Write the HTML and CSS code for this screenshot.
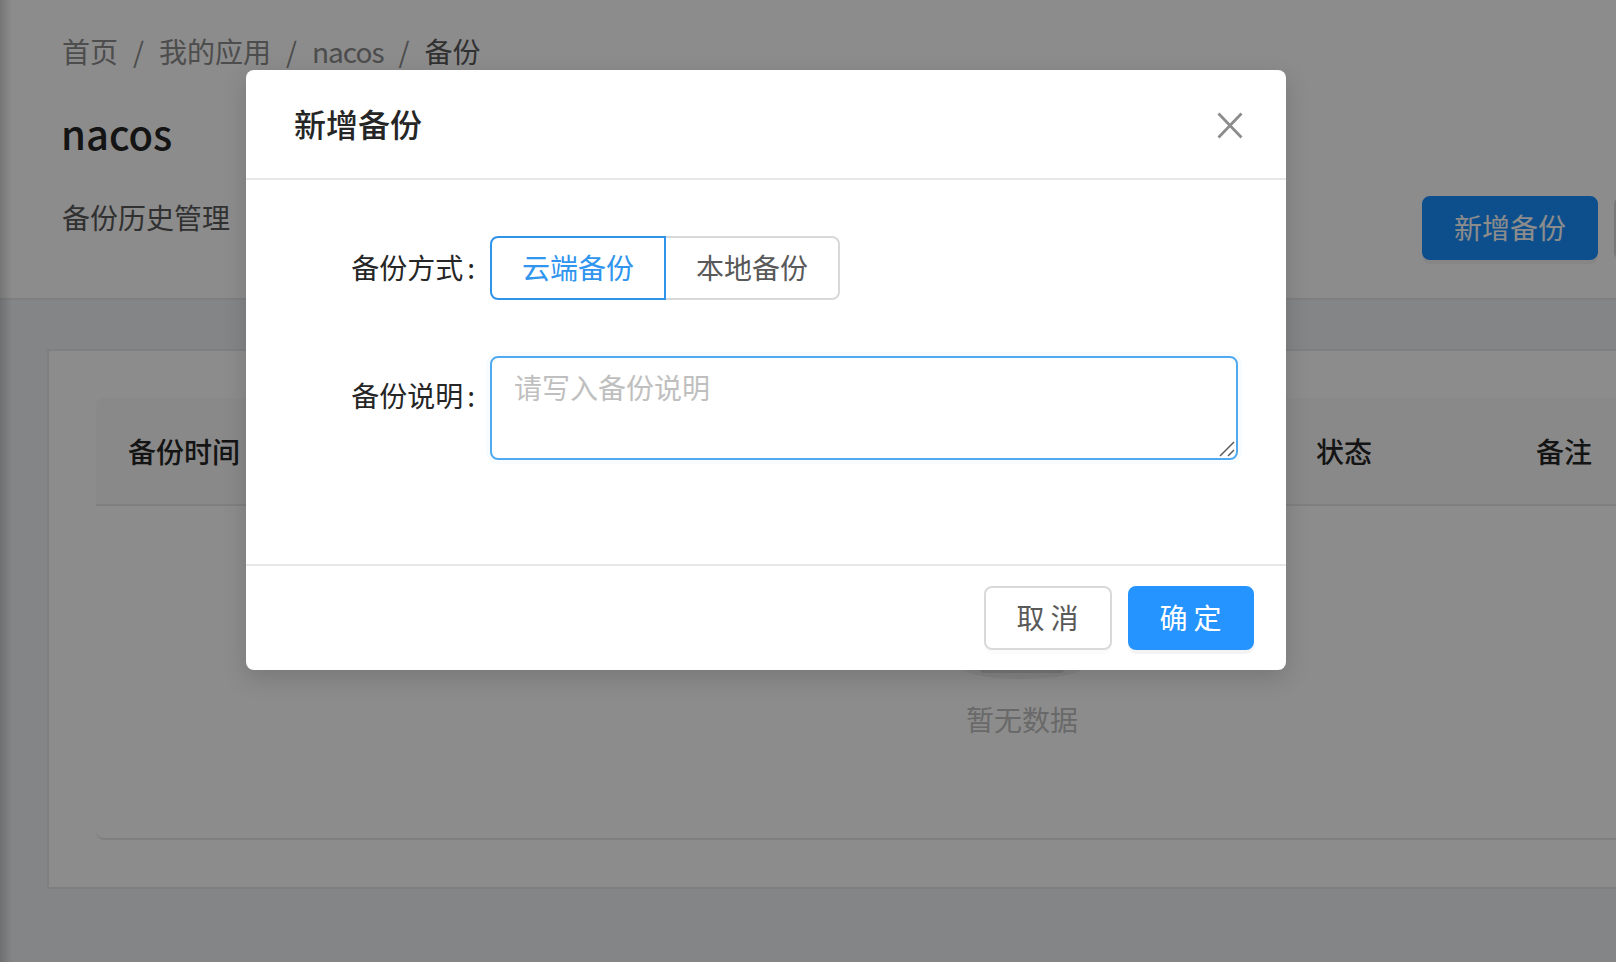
FILE: index.html
```html
<!DOCTYPE html>
<html lang="zh-CN">
<head>
<meta charset="utf-8">
<title>新增备份</title>
<link rel="stylesheet" href="styles.css">
</head>
<body>
<div class="page">
  <header class="head">
    <nav class="crumbs">
      <span>首页</span><span class="sep">/</span>
      <span>我的应用</span><span class="sep">/</span>
      <span class="crumb-latin">nacos</span><span class="sep">/</span>
      <span class="crumb-last">备份</span>
    </nav>
    <h1 class="title">nacos</h1>
    <div class="toolbar">
      <span class="hist">备份历史管理</span>
      <button class="btn btn-primary" type="button">新增备份</button>
      <button class="btn btn-default" type="button"></button>
    </div>
  </header>
  <section class="card">
    <div class="thead">
      <span>备份时间</span>
      <span>状态</span>
      <span>备注</span>
    </div>
    <div class="tbody">
      <svg class="empty-img" width="128" height="82" viewBox="0 0 64 41">
        <ellipse cx="32" cy="33" rx="32" ry="7" fill="#f0f0f0"/>
        <path d="M11 27h42v8a2 2 0 0 1-2 2H13a2 2 0 0 1-2-2z" fill="#d9d9d9"/>
      </svg>
      <div class="empty-text">暂无数据</div>
    </div>
  </section>
</div>
<div class="edge"></div>
<div class="mask"></div>
<div class="modal">
  <div class="modal-head">
    <span class="modal-title">新增备份</span>
    <svg class="close" width="26" height="27" viewBox="0 0 26 27"><path d="M1.5 1.5 24.5 25.5M24.5 1.5 1.5 25.5" fill="none" stroke="#8c8c8c" stroke-width="2.8"/></svg>
  </div>
  <div class="modal-body">
    <div class="row">
      <label class="label"><span>备份方式</span><span class="colon">:</span></label>
      <div class="radio-group">
        <span class="radio radio-on">云端备份</span>
        <span class="radio radio-off">本地备份</span>
      </div>
    </div>
    <div class="row">
      <label class="label label-low"><span>备份说明</span><span class="colon">:</span></label>
      <div class="input-wrap">
        <textarea class="input" placeholder="请写入备份说明"></textarea>
        <svg class="grip" width="16" height="16" viewBox="0 0 16 16"><path d="M1 15 15 1M9 15 15 9" fill="none" stroke="#5c5c5c" stroke-width="1.5"/></svg>
      </div>
    </div>
  </div>
  <div class="modal-foot">
    <button class="btn btn-default btn-two btn-cancel" type="button">取消</button>
    <button class="btn btn-solid btn-two" type="button">确定</button>
  </div>
</div>
</body>
</html>
```
FILE: styles.css
```css
* { box-sizing: border-box; }
html, body {
  margin: 0;
  height: 100%;
  overflow: hidden;
  background: #f0f2f5;
  font-family: "Noto Sans CJK SC", "Noto Sans", sans-serif;
  font-size: 28px;
  line-height: 42px;
  color: #595959;
}
.page { width: 2021px; height: 962px; }
.head {
  background: #fff;
  border-bottom: 2px solid #e8e8e8;
  height: 300px;
  padding: 30px 231px 0 62px;
}
.crumbs { display: flex; color: #8c8c8c; height: 42px; }
.sep { margin: 0 15px; }
.crumb-latin { letter-spacing: -1px; }
.crumb-last { color: #595959; }
.title {
  margin: 33px 0 0 -1px;
  font-size: 40px;
  line-height: 56px;
  font-weight: 500;
  color: #262626;
}
.toolbar { display: flex; align-items: flex-start; gap: 16px; margin-top: 35px; }
.hist { flex: 1; color: #595959; }
.btn {
  width: 176px;
  height: 64px;
  padding: 0 0 2px;
  border-radius: 8px;
  font: inherit;
  box-shadow: 0 4px 0 rgba(0, 0, 0, .015);
}
.btn-primary { background: #1890ff; border: 2px solid #1890ff; color: #fff; box-shadow: 0 4px 0 rgba(0, 0, 0, .045); }
.btn-solid { background: #2694ff; border: 2px solid #2694ff; color: #fff; box-shadow: 0 4px 0 rgba(0, 0, 0, .045); }
.btn-default { background: #fff; border: 2px solid #d9d9d9; color: #595959; }
.btn-two { width: 126px; letter-spacing: 6px; text-indent: 5px; }
.btn-cancel { width: 128px; }
.card {
  margin: 49px 24px 0 47px;
  height: 540px;
  background: #fff;
  border: 2px solid #e8e8e8;
  padding: 47px 47px 46px;
}
.thead {
  display: grid;
  grid-template-columns: 1188px 220px 1fr;
  align-items: center;
  height: 108px;
  padding-left: 32px;
  background: #fafafa;
  border-bottom: 2px solid #e8e8e8;
  font-weight: 500;
  color: #262626;
  border-radius: 8px 8px 0 0;
}
.tbody {
  height: 334px;
  border-bottom: 2px solid #e8e8e8;
  border-radius: 0 0 8px 8px;
  padding-top: 93px;
  display: flex;
  flex-direction: column;
  align-items: center;
}
.empty-img { display: block; }
.empty-text { margin-top: 17px; color: #bfbfbf; }
.edge {
  position: absolute;
  left: 0;
  top: 0;
  bottom: 0;
  width: 12px;
  background: linear-gradient(to right, rgba(0, 0, 0, .16), rgba(0, 0, 0, 0));
}
.mask { position: absolute; inset: 0; background: rgba(0, 0, 0, .45); }
.modal {
  position: absolute;
  left: 246px;
  top: 70px;
  width: 1040px;
  height: 600px;
  display: flex;
  flex-direction: column;
  background: #fff;
  border-radius: 8px;
  box-shadow: 0 8px 24px rgba(0, 0, 0, .15);
}
.modal-head {
  height: 110px;
  flex: none;
  display: flex;
  align-items: center;
  justify-content: space-between;
  padding: 0 43px 2px 48px;
  border-bottom: 2px solid #e8e8e8;
}
.modal-title { font-size: 32px; line-height: 44px; font-weight: 500; color: #262626; }
.close { margin-top: 5px; }
.modal-body {
  flex: 1;
  padding: 56px 48px 0;
  display: flex;
  flex-direction: column;
  gap: 56px;
}
.row { display: flex; align-items: flex-start; }
.label {
  flex: none;
  width: 196px;
  display: flex;
  justify-content: flex-end;
  line-height: 62px;
  color: #262626;
}
.label-low { padding-top: 8px; }
.colon { margin: 0 15px 0 4px; }
.radio-group { display: flex; height: 64px; line-height: 58px; }
.radio { padding: 0 30px; border: 2px solid #d9d9d9; }
.radio-on {
  border-color: #2f93e8;
  color: #2f95ee;
  border-radius: 8px 0 0 8px;
}
.radio-off {
  border-left: 0;
  border-radius: 0 8px 8px 0;
}
.input-wrap { flex: 1; position: relative; }
.input {
  display: block;
  width: 100%;
  height: 104px;
  padding: 8px 22px;
  border: 2px solid #50aaf0;
  border-radius: 8px;
  outline: 0;
  resize: none;
  font: inherit;
  color: #595959;
  box-shadow: 0 0 0 4px rgba(24, 144, 255, .03);
}
.input::placeholder { color: #bfbfbf; opacity: 1; }
.grip { position: absolute; right: 3px; bottom: 3px; }
.modal-foot {
  flex: none;
  height: 106px;
  display: flex;
  justify-content: flex-end;
  gap: 16px;
  padding: 20px 32px;
  border-top: 2px solid #e8e8e8;
}
```
